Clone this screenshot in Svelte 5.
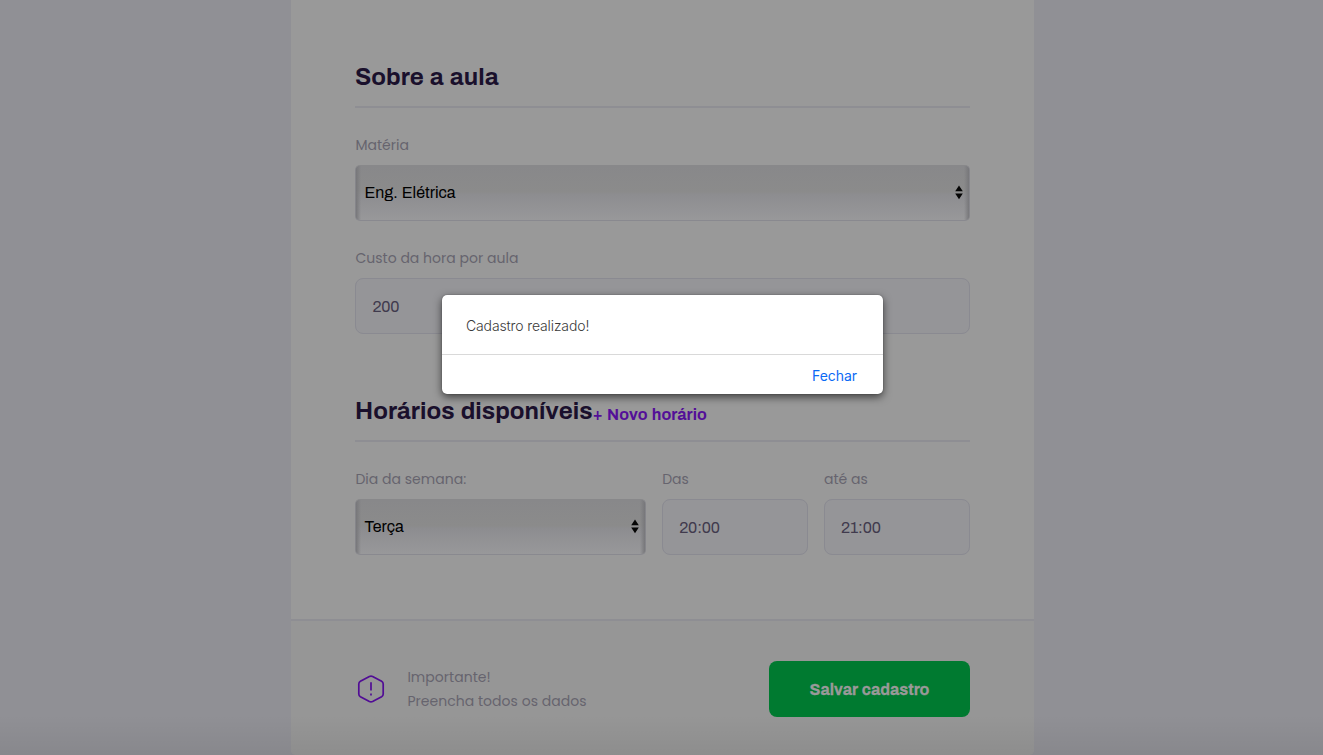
<script>
  let subject = 'Eng. Elétrica';
  let cost = '200';
  let weekday = 'Terça';
  let from = '20:00';
  let to = '21:00';
</script>

{#snippet arrows()}
  <svg class="arrows" width="8" height="15" viewBox="0 0 8 15" aria-hidden="true">
    <path d="M4 0.5 7.8 6.2H.2ZM.2 8.4h7.6L4 14.2Z" fill="#050505" />
  </svg>
{/snippet}

<div class="page">
  <main>
    <div class="form">
      <section>
        <h2><span>Sobre a aula</span></h2>
        <div class="field">
          <span class="label">Matéria</span>
          <div class="select"><span>{subject}</span>{@render arrows()}</div>
        </div>
        <div class="field">
          <span class="label">Custo da hora por aula</span>
          <div class="input">{cost}</div>
        </div>
      </section>
      <section class="schedule">
        <h2><span>Horários disponíveis</span><button class="new">+ Novo horário</button></h2>
        <div class="row">
          <div class="field">
            <span class="label">Dia da semana:</span>
            <div class="select"><span>{weekday}</span>{@render arrows()}</div>
          </div>
          <div class="field">
            <span class="label">Das</span>
            <div class="input">{from}</div>
          </div>
          <div class="field">
            <span class="label">até as</span>
            <div class="input">{to}</div>
          </div>
        </div>
      </section>
    </div>
    <footer>
      <svg class="warn" width="28" height="28" viewBox="0 0 28 28" fill="none" stroke="#510c95" stroke-width="1.7" stroke-linecap="butt">
        <path d="M12.4 1.5Q14 .7 15.6 1.5L24.6 6.3Q26.2 7.2 26.2 9V19Q26.2 20.8 24.6 21.7L15.6 26.5Q14 27.3 12.4 26.5L3.4 21.7Q1.8 20.8 1.8 19V9Q1.8 7.2 3.4 6.3Z" />
        <path d="M14 7.2V15.5M14 18.4V20.5" />
      </svg>
      <p>Importante!<br />Preencha todos os dados</p>
      <button class="save">Salvar cadastro</button>
    </footer>
  </main>
  <div class="shade"></div>
  <div class="dialog" role="alertdialog" aria-label="Cadastro realizado!">
    <div class="message">Cadastro realizado!</div>
    <div class="actions"><button>Fechar</button></div>
  </div>
</div>

<style>
  :global(body) { margin: 0; overflow: hidden; }
  * { box-sizing: border-box; }
  .page {
    position: relative;
    height: 755px;
    overflow: hidden;
    background: #909095;
    font-family: Archivo, "Liberation Sans", Arial, sans-serif;
  }
  main {
    width: 743px;
    height: 755px;
    margin-left: 291px;
    background: #999;
    border-radius: 0 0 5px 5px;
    overflow: hidden;
  }
  .form { height: 619px; padding: 60px 64px 0 64.4px; }
  h2 {
    display: flex;
    align-items: center;
    height: 48px;
    margin: 0;
    padding-bottom: 12px;
    border-bottom: 2px solid #8e8e93;
    color: #1a102c;
    font-size: 24px;
    line-height: 34px;
    font-weight: 700;
    letter-spacing: .05px;
    word-spacing: 1.3px;
    white-space: nowrap;
  }
  h2 span { margin-left: -.4px; }
  button { border: 0; background: none; padding: 0; font: inherit; }
  .new { color: #530f98; font-size: 16px; font-weight: 700; line-height: 20px; padding-top: 7px; letter-spacing: .03px; word-spacing: 1px; white-space: nowrap; }
  .field { display: flex; flex-direction: column; margin-top: 25px; }
  .label {
    height: 24px;
    margin-bottom: 8px;
    color: #66646e;
    font: 14px/24px Poppins, Lato, sans-serif;
    letter-spacing: .02px;
    white-space: nowrap;
  }
  .select, .input {
    display: flex;
    align-items: center;
    height: 56px;
    border: 1px solid #8a8a91;
    border-radius: 8px;
    font-size: 16px;
  }
  .input { background: #959598; color: #403a4d; padding: 1px 16px 0; letter-spacing: -.15px; }
  .select {
    justify-content: space-between;
    padding: 0 6px 1px 8px;
    border-radius: 5px;
    border-color: #88888a #85858a #89898f;
    color: #000;
    word-spacing: .8px;
    background:
      linear-gradient(90deg, #77777a, transparent 5px calc(100% - 5px), #77777a),
      linear-gradient(#88888a, #8b8b8b 48%, #8d8d90 53%, #98989a);
  }
  .arrows { display: block; }
  .schedule { margin-top: 60px; }
  .row { display: grid; grid-template-columns: 291px 146px 146px; gap: 15.8px; }
  footer {
    display: flex;
    align-items: center;
    height: 136px;
    padding: 2px 64px 0 64.4px;
    border-top: 2px solid #8e8e93;
    background: #969696;
  }
  .warn { margin-left: 2px; }
  p { margin: 0 0 0 22px; color: #66646e; font: 14px/24px Poppins, Lato, sans-serif; letter-spacing: .03px; white-space: nowrap; }
  .save {
    width: 201px;
    height: 56px;
    margin-left: auto;
    border-radius: 8px;
    background: #007a30;
    color: #999;
    font-size: 16px;
    font-weight: 700;
    word-spacing: 1px;
    -webkit-text-stroke: .3px #999;
  }
  .shade {
    position: absolute;
    inset: auto 0 0;
    height: 40px;
    background: linear-gradient(transparent, rgba(0, 0, 0, .06));
  }
  .dialog {
    position: absolute;
    left: 442px;
    top: 295px;
    width: 441px;
    height: 99px;
    border-radius: 5px;
    background: #fff;
    box-shadow: 0 0 1px rgba(0, 0, 0, .6), 0 3px 8px rgba(0, 0, 0, .6);
  }
  .message { height: 60px; padding: 21px 24px; border-bottom: 1px solid #d9d9d9; color: #3a3a3a; font: 300 14px/20px Inter, sans-serif; letter-spacing: -.13px; }
  .actions { display: flex; justify-content: flex-end; padding: 11px 26px; }
  .actions button { color: #0b6af5; font: 14px/20px Inter, sans-serif; letter-spacing: -.05px; }
</style>
